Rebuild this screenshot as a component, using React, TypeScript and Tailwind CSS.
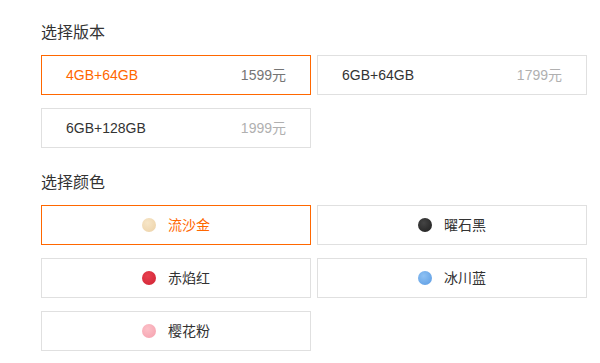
import { useState } from 'react';

const VERSIONS = [
  { name: '4GB+64GB', price: '1599元' },
  { name: '6GB+64GB', price: '1799元' },
  { name: '6GB+128GB', price: '1999元' },
];

const COLORS = [
  { name: '流沙金', dot: 'bg-[radial-gradient(circle_at_40%_35%,#f7e6c8,#ecd1a6)]' },
  { name: '曜石黑', dot: 'bg-[radial-gradient(circle_at_40%_35%,#444,#1e1e1e)]' },
  { name: '赤焰红', dot: 'bg-[radial-gradient(circle_at_40%_35%,#e8404f,#cf2233)]' },
  { name: '冰川蓝', dot: 'bg-[radial-gradient(circle_at_40%_35%,#8ec1f3,#5a9be3)]' },
  { name: '樱花粉', dot: 'bg-[radial-gradient(circle_at_40%_35%,#fcc0c8,#f5a0ad)]' },
];

export default function App() {
  const [version, setVersion] = useState(0);
  const [color, setColor] = useState(0);

  return (
    <div className="w-[600px] h-[363px] bg-white pl-[41px] pt-[21px] font-['Liberation_Sans','Noto_Sans_CJK_SC',sans-serif] text-[#333]">
      <h2 className="text-[16px] leading-[24px] mb-[10px]">选择版本</h2>
      <div className="grid grid-cols-[270px_270px] gap-x-[6px] gap-y-[13px]">
        {VERSIONS.map((v, i) => {
          const active = i === version;
          return (
            <button
              key={v.name}
              onClick={() => setVersion(i)}
              className={`h-[40px] flex items-center justify-between px-[24px] border text-[14px] ${
                active ? 'border-[#ff6700] text-[#ff6700]' : 'border-[#e0e0e0] text-[#333]'
              }`}
            >
              <span>{v.name}</span>
              <span className={active ? 'text-[#757575]' : 'text-[#b0b0b0]'}>{v.price}</span>
            </button>
          );
        })}
      </div>

      <h2 className="text-[16px] leading-[24px] mt-[23px] mb-[10px]">选择颜色</h2>
      <div className="grid grid-cols-[270px_270px] gap-x-[6px] gap-y-[13px]">
        {COLORS.map((c, i) => {
          const active = i === color;
          return (
            <button
              key={c.name}
              onClick={() => setColor(i)}
              className={`h-[40px] flex items-center justify-center gap-[12px] border text-[14px] ${
                active ? 'border-[#ff6700] text-[#ff6700]' : 'border-[#e0e0e0] text-[#333]'
              }`}
            >
              <span className={`w-[14px] h-[14px] rounded-full ${c.dot}`} />
              <span>{c.name}</span>
            </button>
          );
        })}
      </div>
    </div>
  );
}
